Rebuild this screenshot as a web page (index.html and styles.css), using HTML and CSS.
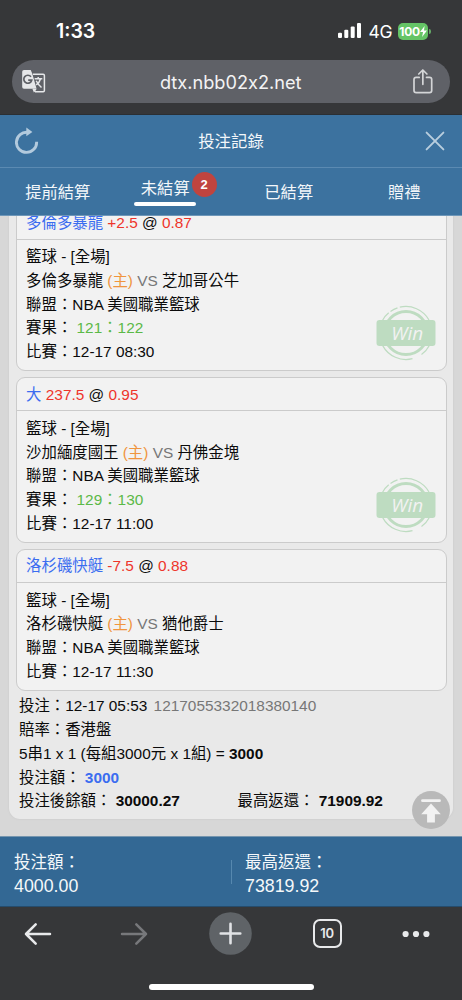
FILE: index.html
```html
<!DOCTYPE html>
<html lang="zh-Hant">
<head>
<meta charset="utf-8">
<title>投注記錄</title>
<link rel="stylesheet" href="styles.css">
</head>
<body>
<div class="screen">
  <div class="browser-top">
    <div class="status">
      <span class="time">1:33</span>
      <span class="status-right">
        <svg class="signal" width="24" height="16" viewBox="0 0 24 16" fill="#fff"><rect x="0" y="9.7" width="4" height="5.3" rx="1.1"/><rect x="6.3" y="6.7" width="4" height="8.3" rx="1.1"/><rect x="12.7" y="3.4" width="4" height="11.6" rx="1.1"/><rect x="19" y="0" width="4" height="15" rx="1.1"/></svg>
        <span class="net">4G</span>
        <span class="battery"><span>100</span><svg width="7" height="11" viewBox="0 0 7 11"><path d="M4.6 0L0 6H3L2.1 11L7 4.6H4Z" fill="#fff"/></svg></span>
        <span class="battery-tip"></span>
      </span>
    </div>
    <div class="url">
      <svg class="translate" width="24" height="24" viewBox="0 0 24 24"><path d="M11 4.3H21.2Q22.4 4.3 22.4 5.5V20.6Q22.4 21.8 21.2 21.8H13.5L11 19" fill="none" stroke="#e6e7e9" stroke-width="1.5"/><path d="M2 0H8.7L10.2 3.5L14.6 18.8H2Q.2 18.8 .2 17V1.8Q.2 0 2 0Z" fill="#e6e7e9"/><path d="M10.8 19H14.7L11.8 22.6Z" fill="#e6e7e9"/><path d="M9 6.8A4 4 0 1 0 9.7 10.2H6.2" fill="none" stroke="#5f6167" stroke-width="1.7"/><path d="M12.6 8.7H20.3M16.2 7V8.7M18.6 8.7Q17.7 12.2 14.2 14.8M14.2 10.8Q16 14.6 19.5 17.5" fill="none" stroke="#e6e7e9" stroke-width="1.5"/></svg>
      <span class="domain">dtx.nbb02x2.net</span>
      <svg class="share" width="20" height="25" viewBox="0 0 20 25" fill="none" stroke="#d4d5d7" stroke-width="1.7" stroke-linecap="round" stroke-linejoin="round"><path d="M6.2 8.4H3.2Q1 8.4 1 10.6V21.5Q1 23.7 3.2 23.7H16.5Q18.7 23.7 18.7 21.5V10.6Q18.7 8.4 16.5 8.4H13.5M9.85 15.3V1M5.8 5L9.85 1L13.9 5"/></svg>
    </div>
  </div>

  <header class="header">
    <svg width="24" height="28" viewBox="0 0 24 28"><path d="M21.6 14.8A10.1 10.1 0 1 1 12.8 5.3" fill="none" stroke="#b3cadd" stroke-width="2.9"/><path d="M11.3 .6L17.4 5L11.3 9.2Z" fill="#b3cadd"/></svg>
    <h1>投注記錄</h1>
    <svg width="20" height="20" viewBox="0 0 20 20"><path d="M1.6 1.6L18.4 18.4M18.4 1.6L1.6 18.4" stroke="#b9cede" stroke-width="1.9" stroke-linecap="round"/></svg>
  </header>
  <nav class="tabs">
    <span class="tab">提前結算</span>
    <span class="tab active"><b>未結算</b><i class="badge">2</i></span>
    <span class="tab">已結算</span>
    <span class="tab">贈禮</span>
  </nav>

  <main class="content">
    <section class="slip">
      <article class="bet">
        <div class="pick"><span class="blue">多倫多暴龍</span> <span class="red">+2.5</span> @ <span class="red">0.87</span></div>
        <div class="detail">
          <p>籃球 - [全場]</p>
          <p>多倫多暴龍 <span class="orange">(主)</span> <span class="gray">VS</span> 芝加哥公牛</p>
          <p>聯盟：NBA 美國職業籃球</p>
          <p>賽果： <span class="green">121：122</span></p>
          <p>比賽：12-17 08:30</p>
          <svg class="win" width="60" height="56" viewBox="0 0 60 56"><g fill="none" stroke="#bedcc1"><circle cx="30" cy="28" r="21.5" stroke-width="3"/><path d="M23.8 2.2A26.5 26.5 0 0 1 53 15M14.5 6.5A26.5 26.5 0 0 1 21.5 2.9M6.6 15.2A26.5 26.5 0 0 1 12.7 7.8M6.7 40.6A26.5 26.5 0 0 0 36.5 53.7M45.5 49.5A26.5 26.5 0 0 0 53.5 40.2" stroke-width="1.2"/></g><rect x=".5" y="15" width="59" height="26" rx="3" fill="#bedcc1"/><text x="31.3" y="34.8" text-anchor="middle">Win</text></svg>
        </div>
      </article>
      <article class="bet">
        <div class="pick"><span class="blue">大</span> <span class="red">237.5</span> @ <span class="red">0.95</span></div>
        <div class="detail">
          <p>籃球 - [全場]</p>
          <p>沙加緬度國王 <span class="orange">(主)</span> <span class="gray">VS</span> 丹佛金塊</p>
          <p>聯盟：NBA 美國職業籃球</p>
          <p>賽果： <span class="green">129：130</span></p>
          <p>比賽：12-17 11:00</p>
          <svg class="win" width="60" height="56" viewBox="0 0 60 56"><g fill="none" stroke="#bedcc1"><circle cx="30" cy="28" r="21.5" stroke-width="3"/><path d="M23.8 2.2A26.5 26.5 0 0 1 53 15M14.5 6.5A26.5 26.5 0 0 1 21.5 2.9M6.6 15.2A26.5 26.5 0 0 1 12.7 7.8M6.7 40.6A26.5 26.5 0 0 0 36.5 53.7M45.5 49.5A26.5 26.5 0 0 0 53.5 40.2" stroke-width="1.2"/></g><rect x=".5" y="15" width="59" height="26" rx="3" fill="#bedcc1"/><text x="31.3" y="34.8" text-anchor="middle">Win</text></svg>
        </div>
      </article>
      <article class="bet">
        <div class="pick"><span class="blue">洛杉磯快艇</span> <span class="red">-7.5</span> @ <span class="red">0.88</span></div>
        <div class="detail">
          <p>籃球 - [全場]</p>
          <p>洛杉磯快艇 <span class="orange">(主)</span> <span class="gray">VS</span> 猶他爵士</p>
          <p>聯盟：NBA 美國職業籃球</p>
          <p>比賽：12-17 11:30</p>
        </div>
      </article>
      <div class="summary">
        <p>投注：12-17 05:53 <span class="gray slip-id">1217055332018380140</span></p>
        <p>賠率：香港盤</p>
        <p>5串1 x 1 (每組3000元 x 1組) = <strong>3000</strong></p>
        <p>投注額： <strong class="blue">3000</strong></p>
        <p class="pair"><span>投注後餘額： <strong>30000.27</strong></span><span>最高返還： <strong>71909.92</strong></span></p>
      </div>
    </section>
    <svg class="to-top" width="38" height="38" viewBox="0 0 38 38"><circle cx="19" cy="19" r="19" fill="#b9b9b9"/><path d="M10.5 9.7H27.5" stroke="#f2f2f2" stroke-width="2.8" stroke-linecap="round"/><path d="M19 12.4L28.8 23.2H22.9V31.5H15.1V23.2H9.2Z" fill="#f2f2f2"/></svg>
  </main>

  <footer class="totals">
    <div><p>投注額：</p><p class="amount">4000.00</p></div>
    <div><p>最高返還：</p><p class="amount">73819.92</p></div>
  </footer>
  <div class="browser-nav">
    <div class="buttons">
      <svg width="28" height="24" viewBox="0 0 28 24" fill="none" stroke="#e8e9eb" stroke-width="2.5" stroke-linecap="round" stroke-linejoin="round"><path d="M26 12H2M11.7 2.3L2 12L11.7 21.7"/></svg>
      <svg width="28" height="24" viewBox="0 0 28 24" fill="none" stroke="#77787b" stroke-width="2.5" stroke-linecap="round" stroke-linejoin="round"><path d="M2 12H26M16.3 2.3L26 12L16.3 21.7"/></svg>
      <svg width="43" height="43" viewBox="0 0 43 43"><circle cx="21.5" cy="21.5" r="21.3" fill="#5f6367"/><path d="M11.7 21.5H31.3M21.5 11.7V31.3" stroke="#e1e3e6" stroke-width="2.6" stroke-linecap="round"/></svg>
      <span class="tab-count">10</span>
      <svg width="28" height="24" viewBox="0 0 28 24" fill="#e8e9eb"><circle cx="3.6" cy="12" r="3.1"/><circle cx="14" cy="12" r="3.1"/><circle cx="24.4" cy="12" r="3.1"/></svg>
    </div>
    <div class="home-bar"></div>
  </div>
</div>
</body>
</html>
```

FILE: styles.css
```css
* { box-sizing: border-box; }
body { margin: 0; font-family: "Liberation Sans", "Noto Sans CJK TC", sans-serif; color: #0b0b0b; }
p, h1 { margin: 0; font-weight: 400; }
svg { display: block; flex: none; }

.screen { width: 462px; height: 1000px; display: flex; flex-direction: column; overflow: hidden; background: #d7d7d7; }

.browser-top { height: 115px; flex: none; background: #363739; color: #fff; border-bottom: 1px solid #2b2f33; font-family: Inter, sans-serif; }
.status { height: 60px; display: flex; justify-content: space-between; padding: 20px 31px 0 56px; }
.time { font-size: 19.5px; font-weight: 600; line-height: 22px; }
.status-right { display: flex; align-items: center; height: 22px; }
.net { font-size: 17.5px; width: 29.5px; margin-left: 6.5px; letter-spacing: -.4px; }
.battery { width: 30px; height: 17px; border-radius: 5px; background: #65c466; display: flex; align-items: center; justify-content: center; font-size: 12px; font-weight: 700; letter-spacing: -.3px; }
.battery-tip { width: 2px; height: 5px; margin-left: 1px; border-radius: 0 2px 2px 0; background: #65a967; }
.url { height: 43px; margin: 0 12px; padding: 0 17px 0 9.5px; border-radius: 22px; background: #5f6167; display: flex; align-items: center; justify-content: space-between; }
.domain { font-size: 18.2px; color: #f3f3f4; font-feature-settings: "calt" 0; margin-left: 3px; }

.header { height: 53px; flex: none; padding: 0 17px 0 15px; background: #3c729f; color: #f3f7fa; border-bottom: 1px solid #5b8ab2; display: flex; align-items: center; justify-content: space-between; }
.header h1 { font-size: 16.4px; line-height: 24px; margin-left: -2px; }
.tabs { height: 48px; flex: none; background: #3c729f; color: #f3f7fa; border-bottom: 1px solid #6e97b9; display: grid; grid-template-columns: repeat(4, 1fr); font-size: 16.3px; line-height: 24px; }
.tab { text-align: center; padding-top: 12px; }
.active { position: relative; padding-top: 8px; display: flex; flex-direction: column; align-items: center; padding-right: 16px; }
.active b { font-weight: 400; }
.active b::after { content: ""; display: block; width: 62px; height: 4px; margin: 2px -6.5px 0; border-radius: 2px; background: #fff; }
.badge { position: absolute; left: 76px; top: 4px; width: 25px; height: 25px; border-radius: 50%; background: #c0443f; font: bold 13px/25px "Liberation Sans", sans-serif; text-align: center; color: #fff; }

.content { height: 620px; flex: none; position: relative; overflow: hidden; padding: 0 9px; font-size: 15.4px; line-height: 23.75px; }
.slip { height: 640px; margin-top: -37px; padding: 26.5px 6.5px 0; background: #e9e9e9; border-radius: 11px; box-shadow: 0 0 2px #c6c6c6; }
.bet { background: #f2f2f2; border: 1px solid #cbcbcb; border-radius: 9px; margin-bottom: 6.3px; }
.pick { height: 33px; padding: 4.2px 9.6px 0; border-bottom: 1px solid #cbcbcb; }
.detail { position: relative; padding: 5.5px 9.6px 6.3px; }
.win { position: absolute; right: 9.5px; bottom: 9px; }
.win text { font: italic 500 19px "Open Sans", sans-serif; fill: #f2f2f2; }
.summary { padding: 0 3.5px; margin-top: -3px; }
.slip-id { margin-left: 2px; }
.pair { display: grid; grid-template-columns: 218.5px 1fr; }
.blue { color: #3b6df0; }
.red { color: #ee352b; }
.orange { color: #f0953e; }
.green { color: #5bb947; }
.gray { color: #777; }
.to-top { position: absolute; left: 412px; top: 575px; }

.totals { height: 71px; flex: none; background: #336894; color: #f5f8fa; border-top: 1px solid #7595ae; border-bottom: 1px solid #254c6d; display: grid; grid-template-columns: 231px 231px; font-size: 16.5px; line-height: 24px; padding-top: 13px; }
.totals .amount { font-size: 17.8px; }
.totals div { padding-left: 14px; }
.totals div + div { position: relative; }
.totals div + div::before { content: ""; position: absolute; left: 0; top: 10px; width: 1px; height: 24px; background: #5688af; }

.browser-nav { flex: 1; background: #363739; }
.buttons { height: 77px; padding-top: 5px; display: grid; grid-template-columns: 75px 118px 75px 118px 59px; justify-items: center; align-items: start; }
.buttons svg:not([width="43"]) { margin-top: 9.5px; }
.tab-count { width: 29px; height: 29px; margin-top: 7px; border: 2.5px solid #e8e9eb; border-radius: 7px; color: #e8e9eb; font: 600 13px/24px Inter, sans-serif; text-align: center; letter-spacing: -.3px; }
.home-bar { width: 165px; height: 6px; margin: 0 auto; border-radius: 3px; background: #fff; }
```
